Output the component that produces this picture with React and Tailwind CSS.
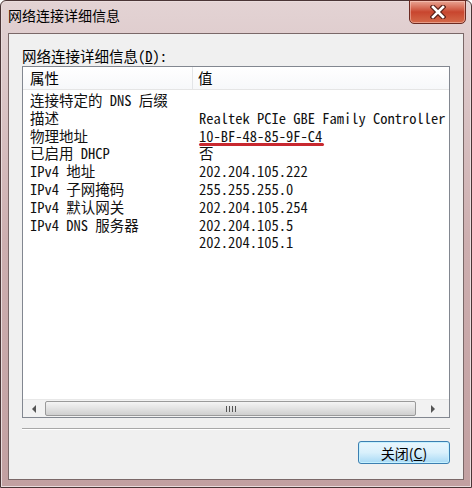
import { useState } from 'react'

const rows = [
  ['连接特定的 DNS 后缀', ''],
  ['描述', 'Realtek PCIe GBE Family Controller'],
  ['物理地址', '10-BF-48-85-9F-C4', true],
  ['已启用 DHCP', '否'],
  ['IPv4 地址', '202.204.105.222'],
  ['IPv4 子网掩码', '255.255.255.0'],
  ['IPv4 默认网关', '202.204.105.254'],
  ['IPv4 DNS 服务器', '202.204.105.5'],
  ['', '202.204.105.1'],
]

const listFont = {
  fontFamily: '"Noto Sans Mono CJK SC", "Liberation Mono", "Noto Sans CJK SC", monospace',
}

function CloseButton() {
  return (
    <div className="mt-[-1px] w-[57px] h-[24px] rounded-b-[5px] border border-[#6b2a22] bg-gradient-to-b from-[#e8a493] via-[#c8452e] to-[#d4694a] flex items-center justify-center shadow-[inset_0_0_0_1px_rgba(255,220,210,0.45)]">
      <svg width="16" height="14" viewBox="0 0 16 14">
        <path d="M3 2 L13 12 M13 2 L3 12" stroke="#5a2018" strokeWidth="5" strokeLinecap="square" />
        <path d="M3 2 L13 12 M13 2 L3 12" stroke="#ffffff" strokeWidth="2.6" strokeLinecap="square" />
      </svg>
    </div>
  )
}

function ScrollBar() {
  return (
    <div className="h-[18px] flex items-stretch bg-[#f2f2f2] border-t border-[#e8e8e8]">
      <div className="w-[22px] flex items-center justify-center">
        <div className="w-0 h-0 border-y-[4px] border-y-transparent border-r-[4px] border-r-[#555]" />
      </div>
      <div className="flex-1 my-[1px] rounded-[2px] border border-[#9a9a9a] bg-gradient-to-b from-[#f4f4f4] via-[#e2e2e2] to-[#cfcfcf] flex items-center justify-center gap-[2px]">
        <span className="w-[1px] h-[6px] bg-[#555]" />
        <span className="w-[1px] h-[6px] bg-[#555]" />
        <span className="w-[1px] h-[6px] bg-[#555]" />
        <span className="w-[1px] h-[6px] bg-[#555]" />
      </div>
      <div className="w-[33px] flex items-center justify-center">
        <div className="w-0 h-0 border-y-[4px] border-y-transparent border-l-[4px] border-l-[#555]" />
      </div>
    </div>
  )
}

export default function App() {
  const [selected] = useState(null)

  return (
    <div className="w-[472px] h-[488px] flex flex-col border border-[#4a3536] rounded-t-[6px] bg-gradient-to-b from-[#e3d3d4] via-[#cdaeaf] to-[#c2a0a1] shadow-[inset_0_0_0_1px_#e9dcdc]">
      {/* Title bar */}
      <div className="h-[32px] flex items-start justify-between pl-[7px] pr-[5px]">
        <span className="mt-[5px] text-[14px] leading-[18px] text-black" style={{ fontFamily: '"Noto Sans CJK SC", sans-serif' }}>
          网络连接详细信息
        </span>
        <CloseButton />
      </div>

      {/* Client area */}
      <div className="mx-[7px] h-[447px] border border-[#7a6868] bg-[#f0f0f0] flex flex-col px-[13px] pt-[12px]">
        <div className="h-[19px] text-[14.5px] leading-[19px] text-black" style={listFont}>
          网络连接详细信息(<span className="underline">D</span>):
        </div>

        {/* List view */}
        <div className="mt-[1px] h-[352px] border border-[#828790] bg-white flex flex-col" style={listFont}>
          <div className="h-[23px] flex border-b border-[#e5e5e5] bg-gradient-to-b from-white to-[#f7f8fa] text-[14.5px] text-black">
            <div className="w-[170px] pl-[7px] flex items-center border-r border-[#e3e5e8]">属性</div>
            <div className="flex-1 pl-[5px] flex items-center">值</div>
          </div>
          <div className="flex-1 pt-[1px] overflow-hidden">
            {rows.map(([name, value, mark], i) => (
              <div
                key={i}
                className={`h-[17.8px] flex text-[14.5px] leading-[17.8px] text-[#111] whitespace-nowrap ${selected === i ? 'bg-[#cce8ff]' : ''}`}
              >
                <div className="w-[170px] pl-[7px] shrink-0">{name}</div>
                <div className={`flex-1 pl-[6px] ${mark ? '' : 'overflow-hidden'}`}>
                  <span className={mark ? 'relative inline-block h-[19.5px]' : ''}>
                    {value}
                    {mark && <span className="absolute left-0 right-[-2px] bottom-0 h-[3px] rounded-full bg-[#c8282f]" />}
                  </span>
                </div>
              </div>
            ))}
          </div>
          <ScrollBar />
        </div>

        {/* Separator */}
        <div className="mt-[10px] h-[2px] border-t border-[#a8a8a8] border-b border-b-white" />

        {/* Buttons */}
        <div className="mt-[11px] flex justify-end">
          <button className="w-[92px] h-[23px] rounded-[3px] border border-[#3c7fb1] bg-gradient-to-b from-[#eaf6fd] via-[#d9f0fc] to-[#a7d9f5] shadow-[inset_0_0_0_1px_#c5f1ff] text-[14px] leading-[20px] text-black" style={{ fontFamily: '"Noto Sans CJK SC", sans-serif' }}>
            关闭(<span className="underline">C</span>)
          </button>
        </div>
      </div>
    </div>
  )
}
